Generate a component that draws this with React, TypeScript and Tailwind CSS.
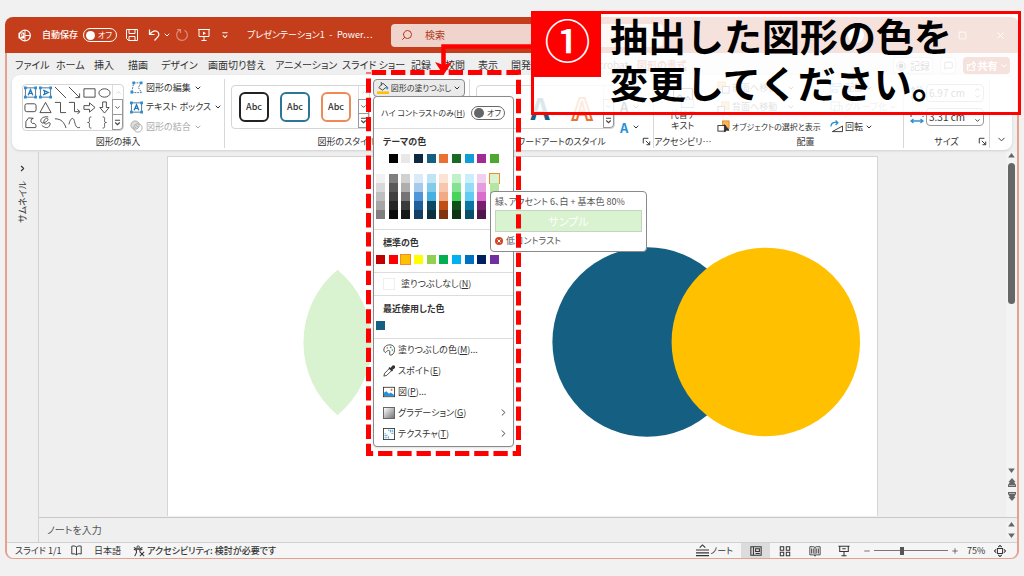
import type { ReactNode } from 'react'
import { ChevronDown, ChevronRight, MessageSquare, Minus, Plus, Search, Square, X } from 'lucide-react'

const tabs = ['ファイル', 'ホーム', '挿入', '描画', 'デザイン', '画面切り替え', 'アニメーション', 'スライド ショー', '記録', '校閲', '表示', '開発', 'ヘルプ', 'Acrobat', '図形の書式']

const themeColors = ['#ffffff', '#000000', '#e8e8e8', '#0e2841', '#156082', '#e97132', '#196b24', '#0f9ed5', '#a02b93', '#4ea72e']

const shades = [
  ['#f2f2f2', '#d9d9d9', '#bfbfbf', '#a6a6a6', '#7f7f7f'],
  ['#7f7f7f', '#595959', '#404040', '#262626', '#0d0d0d'],
  ['#d1d1d1', '#aeaeae', '#747474', '#3a3a3a', '#171717'],
  ['#dceaf7', '#a6caec', '#4e95d9', '#215f9a', '#153e64'],
  ['#c1e4f5', '#83cbeb', '#45b0e1', '#104862', '#0c3042'],
  ['#fbe3d6', '#f6c6ad', '#f2aa84', '#c04f15', '#80350e'],
  ['#c1f1c8', '#84e291', '#47d45a', '#12501b', '#0d3512'],
  ['#caeefb', '#95dcf7', '#61cbf4', '#0b769f', '#084f6a'],
  ['#f2cfee', '#e59edd', '#d86dcd', '#78206e', '#501549'],
  ['#d9f2d0', '#b4e5a2', '#8ed973', '#3b7d23', '#275317'],
]

const standardColors = ['#c00000', '#ff0000', '#ffc000', '#ffff00', '#92d050', '#00b050', '#00b0f0', '#0070c0', '#002060', '#7030a0']

function Icon({ children, size = 14, className = '' }: { children: ReactNode; size?: number; className?: string }) {
  return (
    <svg width={size} height={size} viewBox="0 0 14 14" fill="none" stroke="currentColor" strokeWidth="1" className={`shrink-0 ${className}`} aria-hidden="true">
      {children}
    </svg>
  )
}

function Caret() {
  return <ChevronDown size={8} strokeWidth={3} className="shrink-0" aria-hidden="true" />
}

function TitleBar() {
  return (
    <header className="flex h-9 items-center rounded-t-lg bg-[#c43e1c] text-[9px] text-white">
      <Icon size={13} className="ml-[13px]">
        <circle cx="7.5" cy="7" r="5.8" strokeWidth="1.3" />
        <path d="M7.5 1.2V7h5.8M7.5 7v5.8" />
        <rect x="0.5" y="3.8" width="6.5" height="6.5" rx="1" fill="white" stroke="none" />
        <path d="M2.8 9V5.2h1.4a1.1 1.1 0 0 1 0 2.3H2.8" stroke="#c43e1c" />
      </Icon>
      <span className="ml-[11px] w-9 font-medium">自動保存</span>
      <button type="button" role="switch" aria-checked="false" className="ml-[5px] flex h-[14px] w-[34px] shrink-0 items-center gap-[3px] rounded-full border border-white pl-[2px] text-[8px]">
        <span className="size-[9px] shrink-0 rounded-full bg-white" />
        オフ
      </button>
      <button type="button" aria-label="上書き保存" className="ml-2">
        <Icon>
          <path d="M1.5 1.5h11v11h-9l-2-2zM4 1.5v4h6v-4M4 12.5v-4h6v4" />
        </Icon>
      </button>
      <button type="button" aria-label="元に戻す" className="ml-2 flex items-center gap-[2px]">
        <Icon>
          <path d="M2.5 1.5v5h5M2.7 6.3C5 3.500 7.500 2 9.800 3.200c2.700 1.500 2.500 4.300.8 6L7.500 12.500" strokeWidth="1.200" />
        </Icon>
        <Caret />
      </button>
      <button type="button" aria-label="やり直し" className="ml-1 opacity-40">
        <Icon>
          <path d="M2 1.500h3.500V5M5.500 1.800A5.400 5.400 0 1 0 9.500 2.200" strokeWidth="1.200" />
        </Icon>
      </button>
      <button type="button" aria-label="最初から" className="ml-2">
        <Icon>
          <path d="M1 1.500h12M2 1.500v7h10v-7M7 8.500v4M4.500 12.500h5" />
          <path d="M6 3.500v3.500l3-1.700z" fill="currentColor" stroke="none" />
        </Icon>
      </button>
      <button type="button" aria-label="クイック アクセスのカスタマイズ" className="ml-2">
        <Icon size={12}>
          <path d="M4 4.500h6M4.500 7.500 7 10l2.500-2.500" strokeWidth="1.200" />
        </Icon>
      </button>
      <h1 className="ml-4 w-[144px] shrink-0">プレゼンテーション1&ensp;-&ensp;Power⋯</h1>
      <label className="flex h-[23px] w-[272px] items-center gap-3 rounded-sm bg-[#f0d4cc] pl-[10px] text-[#b0391a]">
        <Search size={12} className="shrink-0 -scale-x-100" aria-hidden="true" />
        <input type="search" aria-label="検索" placeholder="検索" className="w-full bg-transparent text-[10px] outline-none placeholder:text-[#b0391a]" />
      </label>
      <span className="ml-auto size-4 rounded-full bg-white" />
      <div className="ml-14 flex items-center gap-7 pr-[13px]">
        <button type="button" aria-label="最小化">
          <Minus size={10} />
        </button>
        <button type="button" aria-label="最大化">
          <Square size={9} />
        </button>
        <button type="button" aria-label="閉じる">
          <X size={11} />
        </button>
      </div>
    </header>
  )
}

function TabRow() {
  return (
    <div className="flex h-[22px] items-center justify-between pr-[7px] pl-2">
      <nav className="grid grid-cols-[41px_38px_34px_33px_47px_67px_67px_69px_34px_33px_33px_36px_45px_45px_50px] pt-[2px]">
        {tabs.map((tab) => (
          <a key={tab} href="#" className={tab === '図形の書式' ? 'font-bold text-[#c43e1c] underline' : ''}>
            {tab}
          </a>
        ))}
      </nav>
      <div className="flex items-center gap-[7px] pt-[3px]">
        <button type="button" className="flex h-[17px] w-10 items-center justify-center gap-1 rounded-sm border border-[#c8c8c8] bg-white">
          <Icon size={10}>
            <circle cx="7" cy="7" r="6" />
            <circle cx="7" cy="7" r="3" fill="currentColor" />
          </Icon>
          記録
        </button>
        <button type="button" aria-label="コメント" className="flex h-[17px] w-4 items-center justify-center rounded-sm border border-[#c8c8c8] bg-white">
          <MessageSquare size={9} />
        </button>
        <button type="button" className="flex h-[17px] w-[47px] items-center justify-center gap-[2px] rounded-sm bg-[#c43e1c] font-bold text-white">
          <Icon size={10}>
            <path d="M6 5H2v8h10V9M4 9c0-4 3-5 6-5V1l4 4-4 4V6" strokeWidth="1.500" />
          </Icon>
          共有
          <Caret />
        </button>
      </div>
    </div>
  )
}

function GalleryScroll() {
  return (
    <div className="flex w-[11px] shrink-0 flex-col text-[#444]">
      <button type="button" aria-label="上へ" className="flex flex-1 items-center justify-center border-l border-[#ddd] text-[#bbb]">
        <ChevronDown size={7} className="rotate-180" />
      </button>
      <button type="button" aria-label="下へ" className="flex flex-1 items-center justify-center border border-[#999]">
        <ChevronDown size={7} strokeWidth={3} />
      </button>
      <button type="button" aria-label="その他" className="flex flex-1 items-center justify-center rounded-br-sm border border-t-0 border-[#999]">
        <Icon size={9}>
          <path d="M3 3.500h8M3.500 7 7 10.500 10.500 7" strokeWidth="1.800" />
        </Icon>
      </button>
    </div>
  )
}

function Group({ label, className, launcher, children }: { label: string; className: string; launcher?: boolean; children: ReactNode }) {
  return (
    <section className={`flex shrink-0 items-stretch pt-1 pb-[2px] ${className}`}>
      <div className="flex flex-1 flex-col">
        <div className="flex h-14 shrink-0">{children}</div>
        <div className="relative flex h-[13px] items-center justify-center text-[9px]">
          {label}
          {launcher ? (
            <button type="button" aria-label={`${label}の詳細`} className="absolute right-[2px]">
              <Icon size={9}>
                <path d="M2 10V2h8M6 6l6 6M12 7v5H7" strokeWidth="1.500" />
              </Icon>
            </button>
          ) : null}
        </div>
      </div>
      <div className="w-px bg-[#d8d8d8]" />
    </section>
  )
}

function TextBoxIcon({ vertical }: { vertical?: boolean }) {
  return (
    <Icon size={13}>
      <rect x="1.500" y="2" width="11" height="10" stroke="#4a6f8f" />
      <path d="M0 .5h3v3H0zM11 .5h3v3h-3zM0 10.500h3v3H0zM11 10.500h3v3h-3z" fill="#2b8fd6" stroke="none" />
      <path d={vertical ? 'M4.500 4.500 10 7l-5.500 2.500M6 5.500v3' : 'M4.500 10 7 4l2.500 6M5.500 8h3'} stroke="#1b78c2" strokeWidth="1.400" />
    </Icon>
  )
}

const shapePaths = [
  'M1 1l12 12',
  'M1 1l11 11M12.500 8v4.500H8',
  'M1 3h12v9H1z',
  'M1 7.500a6 4.500 0 1 0 12 0a6 4.500 0 1 0-12 0',
  'M3 3h8a2 2 0 0 1 2 2v4.500a2 2 0 0 1-2 2H3a2 2 0 0 1-2-2V5a2 2 0 0 1 2-2z',
  'M7 1.500 13 12.500H1z',
  'M1 1.500h6v11h6',
  'M1 1.500h6v10h5M10 9l3 2.500-3 2.500',
  'M1 5h6V2l6 5-6 5V9H1z',
  'M5 1h4v6h3l-5 6-5-6h3z',
  'M5 2 2 6v6.500h10.500a3 3 0 0 0-3.500-4.500a3 3 0 0 1 1-5.500z',
  'M10 1C5 0 1 3 2 6s5 1 7-1-1-4-3-1 0 6 3 4 4 0 2 3-6 1-8-1',
  'M1 3c7 0 10 4 12 10',
  'M1 9C3 1 6 1 7 6s3 8 6 6',
  'M9 1C6 1 7 3 7 5s-1 2-2 2c1 0 2 0 2 2s-1 4 2 4',
  'M5 1c3 0 2 2 2 4s1 2 2 2c-1 0-2 0-2 2s1 4-2 4',
]

function ShapeGroup() {
  return (
    <Group label="図形の挿入" className="w-[213px]">
      <div className="mt-[5px] ml-[10px] flex h-[47px] w-[102px] rounded-sm border border-[#d5d5d5]">
        <div className="grid flex-1 grid-cols-6 place-items-center text-[#444]">
          <TextBoxIcon />
          <TextBoxIcon vertical />
          {shapePaths.map((d) => (
            <Icon key={d} size={13}>
              <path d={d} />
            </Icon>
          ))}
        </div>
        <GalleryScroll />
      </div>
      <div className="ml-[6px] flex flex-col justify-between py-[2px] text-[9px]">
        <button type="button" className="flex items-center gap-[3px]">
          <Icon size={13}>
            <path d="M4 2h8M2 11.500 4 2M12 2l-3 5 3.500 5.500H2" stroke="#4a6f8f" strokeDasharray="2 1" />
            <path d="M2.500.500h3v3h-3zM10.500.500h3v3h-3zM.5 10.500h3v3h-3z" fill="#2b8fd6" stroke="none" />
          </Icon>
          図形の編集
          <Caret />
        </button>
        <button type="button" className="flex items-center gap-[3px]">
          <TextBoxIcon />
          テキスト ボックス
          <Caret />
        </button>
        <button type="button" disabled className="flex items-center gap-[3px] text-[#aaa]">
          <Icon size={13}>
            <circle cx="5.500" cy="5.500" r="4.500" fill="#ddd" />
            <circle cx="8.500" cy="8.500" r="4.500" />
            <path d="M6 5l3 3M5 7l2 2" />
          </Icon>
          図形の結合
          <Caret />
        </button>
      </div>
    </Group>
  )
}

function Swatch({ color, selected }: { color: string; selected?: boolean }) {
  return (
    <button
      type="button"
      aria-label={color}
      className={selected ? 'size-[9px] shrink-0 outline-1 outline-[#f08c2e]' : 'size-[9px] shrink-0'}
      style={{ backgroundColor: color }}
    />
  )
}

function MenuHeading({ children }: { children: ReactNode }) {
  return <h2 className="flex h-[25px] items-center pl-[9px] text-[9px] font-bold">{children}</h2>
}

function MenuItem({ icon, label, accessKey, tail, submenu }: { icon: ReactNode; label: string; accessKey: string; tail?: string; submenu?: boolean }) {
  return (
    <button type="button" className="flex h-[21px] w-full items-center gap-[3px] pr-1 pl-[9px] text-left">
      {icon}
      <span>
        {label}(<u>{accessKey}</u>){tail}
      </span>
      {submenu ? <ChevronRight size={11} className="ml-auto" aria-hidden="true" /> : null}
    </button>
  )
}

function ColorTooltip() {
  return (
    <div role="tooltip" className="absolute top-[94px] left-[116px] flex h-[61px] w-[157px] flex-col rounded-sm border border-[#8a8a8a] bg-white px-1 pt-[2px] text-[9px] text-[#555]">
      <div className="flex h-4 items-center">緑、アクセント 6、白 + 基本色 80%</div>
      <div className="flex h-[22px] items-center justify-center border border-[#c5d3bf] bg-[#d9f2d0] text-[11px] text-white">サンプル</div>
      <div className="flex h-[18px] items-center gap-[3px]">
        <svg width="8" height="8" viewBox="0 0 8 8" aria-hidden="true">
          <circle cx="4" cy="4" r="4" fill="#d24726" />
          <path d="M2.500 2.500l3 3M5.500 2.500l-3 3" stroke="white" />
        </svg>
        低コントラスト
      </div>
    </div>
  )
}

function FillMenu() {
  return (
    <div className="absolute top-[17px] left-0 z-20 w-[141px] rounded-sm border border-[#8a8a8a] bg-white pb-[2px] text-[9px] text-[#333] shadow-sm">
      <div className="flex h-8 items-center justify-between border-b border-[#ddd] pr-2 pl-[7px] text-[8px]">
        <span>
          ハイ コントラストのみ(<u>H</u>)
        </span>
        <button type="button" role="switch" aria-checked="false" aria-label="ハイ コントラストのみ" className="flex h-[14px] w-[34px] shrink-0 items-center gap-[3px] rounded-full border border-[#666] pl-[2px]">
          <span className="size-[10px] shrink-0 rounded-full bg-[#666]" />
          オフ
        </button>
      </div>
      <MenuHeading>テーマの色</MenuHeading>
      <div className="flex justify-between pr-[14px] pl-[2px]">
        {themeColors.map((color) => (
          <Swatch key={color} color={color} />
        ))}
      </div>
      <div className="mt-[11px] flex justify-between pr-[14px] pb-[10px] pl-[2px]">
        {shades.map((column, i) => (
          <div key={themeColors[i]} className="flex flex-col">
            {column.map((color) => (
              <Swatch key={color} color={color} selected={color === '#d9f2d0'} />
            ))}
          </div>
        ))}
      </div>
      <div className="border-t border-[#ddd]">
        <MenuHeading>標準の色</MenuHeading>
        <div className="flex justify-between pr-[14px] pb-2 pl-[2px]">
          {standardColors.map((color) => (
            <Swatch key={color} color={color} selected={color === '#ffc000'} />
          ))}
        </div>
      </div>
      <button type="button" className="flex h-6 w-full items-center gap-[6px] border-t border-b border-[#ddd] pl-[9px]">
        <span className="size-3 border border-[#eee]" />
        <span>
          塗りつぶしなし(<u>N</u>)
        </span>
      </button>
      <MenuHeading>最近使用した色</MenuHeading>
      <div className="flex border-b border-[#ddd] pb-2 pl-[2px]">
        <Swatch color="#156082" />
      </div>
      <MenuItem
        label="塗りつぶしの色"
        accessKey="M"
        tail="..."
        icon={
          <Icon size={12}>
            <path d="M1 7C1 3 4 1 8 1s6 3 5.500 6.500C13 11 11 13 9 13s-1-2-1-4-3-2-4 0-3 0-3-2z" />
            <circle cx="5" cy="4.500" r="1" fill="#e97132" stroke="none" />
            <circle cx="9" cy="4" r="1" fill="#2b8fd6" stroke="none" />
            <circle cx="11" cy="7" r="1" fill="#4ea72e" stroke="none" />
          </Icon>
        }
      />
      <MenuItem
        label="スポイト"
        accessKey="E"
        icon={
          <Icon size={12}>
            <path d="M1 13l1-3.500L7.500 4l2.500 2.500L4.500 12z" />
            <path d="M7 3l4 4M9 5l2.500-3.500a1 1 0 0 1 1.500 1.500L9.500 5.500" strokeWidth="2" />
          </Icon>
        }
      />
      <MenuItem
        label="図"
        accessKey="P"
        tail="..."
        icon={
          <Icon size={12}>
            <rect x=".5" y="1.500" width="13" height="11" />
            <path d="M1 12V8l3-2 3 3 2-1.500 4 3V12z" fill="#2b8fd6" stroke="none" />
            <circle cx="10" cy="4.500" r="1.200" fill="#e97132" stroke="none" />
          </Icon>
        }
      />
      <MenuItem
        label="グラデーション"
        accessKey="G"
        submenu
        icon={<span className="size-3 shrink-0 border border-[#666] bg-linear-to-br from-white to-[#777]" />}
      />
      <MenuItem
        label="テクスチャ"
        accessKey="T"
        submenu
        icon={
          <Icon size={12}>
            <rect x=".5" y=".5" width="13" height="13" />
            <path d="M2.500 6v6.500M4.500 8v4.500M6.500 10v2.500M6 2.500h6.500M8 4.500h4.500M10 6.500h2.500" stroke="#2b8fd6" strokeWidth="1.200" strokeDasharray="1.300 .8" />
          </Icon>
        }
      />
      <ColorTooltip />
    </div>
  )
}

function StyleGroup() {
  const card = 'flex h-[30px] w-[30px] items-center justify-center rounded-md border-2'
  return (
    <Group label="図形のスタイル" className="w-[245px]">
      <div className="mt-[6px] ml-[6px] flex h-[44px] w-[139px] shrink-0 rounded-sm border border-[#d5d5d5]">
        <div className="flex flex-1 items-center justify-between pr-[7px] pl-[7px] text-[9px] font-medium">
          <button type="button" className={`${card} border-[#222]`}>
            Abc
          </button>
          <button type="button" className={`${card} border-[#2c7599]`}>
            Abc
          </button>
          <button type="button" className={`${card} border-[#ee8a57]`}>
            Abc
          </button>
        </div>
        <GalleryScroll />
      </div>
      <div className="relative ml-[3px] h-[18px] w-[92px] shrink-0">
        <button type="button" className="flex h-[18px] w-full items-center justify-center gap-[2px] rounded-sm border border-[#8a8a8a] bg-[#ebebeb] text-[8px]">
          <Icon size={12}>
            <path d="M2 6.500 7 1.500l4.500 4L6.500 9.500zM5 0v4" />
            <path d="M12 5.500v3" stroke="#2b8fd6" strokeWidth="2" />
            <path d="M0 11h14v3H0z" fill="#ffc000" stroke="none" />
          </Icon>
          図形の塗りつぶし
          <Caret />
        </button>
        <FillMenu />
      </div>
    </Group>
  )
}

function WordArtGroup() {
  return (
    <Group label="ワードアートのスタイル" className="w-[184px]" launcher>
      <div className="mt-[6px] ml-[6px] flex h-[44px] w-[139px] rounded-sm border border-[#d5d5d5]">
        <div className="flex flex-1 items-center justify-around text-[30px] leading-none font-bold">
          <button type="button" className="text-[#222]">A</button>
          <button type="button" className="text-[#156082]">A</button>
          <button type="button" className="text-white [-webkit-text-stroke:2px_#e97132]">A</button>
        </div>
        <GalleryScroll />
      </div>
      <div className="ml-[5px] flex flex-col justify-end gap-[2px] text-[13px] leading-none font-bold">
        <button type="button" aria-label="文字の塗りつぶし" className="flex h-5 items-center gap-1">
          <span className="border-b-2 border-[#222]">A</span>
          <Caret />
        </button>
        <button type="button" aria-label="文字の効果" className="flex h-4 items-center gap-1">
          <span className="text-[#2b8fd6]">A</span>
          <Caret />
        </button>
      </div>
    </Group>
  )
}

function OrderIcon({ flip }: { flip?: boolean }) {
  return (
    <Icon size={13}>
      <rect x={flip ? 5 : 1} y="1" width="8" height="8" fill="#f7b55e" stroke="#e08b24" />
      <rect x={flip ? 1 : 6} y="6" width="7" height="7" fill="white" />
    </Icon>
  )
}

function ArrangeGroup() {
  return (
    <Group label="配置" className="w-[196px]">
      <div className="flex w-[114px] shrink-0 flex-col justify-between py-[2px] pl-[9px] text-[9px]">
        <button type="button" className="flex items-center gap-[2px]">
          <OrderIcon />
          前面へ移動
          <span className="ml-2">
            <Caret />
          </span>
        </button>
        <button type="button" className="flex items-center gap-[2px]">
          <OrderIcon flip />
          背面へ移動
          <span className="ml-2">
            <Caret />
          </span>
        </button>
        <button type="button" className="flex items-center gap-[2px] text-[8px]">
          <Icon size={13}>
            <rect x="6" y="1" width="7" height="8" fill="#f7b55e" stroke="#e08b24" />
            <rect x="1" y="6" width="8" height="6" fill="white" />
            <path d="M8 5v8l2-2h3z" fill="#333" />
          </Icon>
          オブジェクトの選択と表示
        </button>
      </div>
      <div className="flex flex-col justify-between py-[2px] pl-[8px] text-[9px]">
        <button type="button" className="flex items-center gap-[2px]">
          <Icon size={13}>
            <path d="M1 1v12M3 3h9v3H3zM3 9h5v3H3z" stroke="#2b8fd6" />
          </Icon>
          配置
          <Caret />
        </button>
        <button type="button" disabled className="flex items-center gap-[2px] text-[#999]">
          <Icon size={13}>
            <path d="M1 1h9v9H1zM5 5h8v8H5z" />
          </Icon>
          グループ化
          <Caret />
        </button>
        <button type="button" className="flex items-center gap-[2px]">
          <Icon size={13}>
            <path d="M2.500 12.500h11v-6z" />
            <path d="M1 7c0-4 3-5 7-4M6 .5 8.500 3 6 5.500" stroke="#2b8fd6" strokeWidth="1.400" />
          </Icon>
          回転
          <Caret />
        </button>
      </div>
    </Group>
  )
}

function SizeField({ label, value, vertical }: { label: string; value: string; vertical?: boolean }) {
  return (
    <label className="flex items-center gap-[2px]">
      <Icon className={vertical ? 'rotate-90' : ''}>
        <path d="M1 7V2h12v5" strokeDasharray="2 1" />
        <path d="M1 11h12M3.500 9 1 11l2.500 2M10.500 9l2.500 2-2.500 2" stroke="#2b8fd6" strokeWidth="1.300" />
      </Icon>
      <span className="flex h-[18px] w-[58px] items-center rounded-sm border border-[#999] pr-[2px] pl-[2px]">
        <input aria-label={label} defaultValue={value} className="w-full min-w-0 bg-transparent text-[10px] outline-none" />
        <span className="flex flex-col">
          <ChevronDown size={7} strokeWidth={3} className="rotate-180" />
          <ChevronDown size={7} strokeWidth={3} />
        </span>
      </span>
    </label>
  )
}

function Ribbon() {
  return (
    <div className="mx-[5px] flex rounded-lg bg-white shadow-sm">
      <ShapeGroup />
      <StyleGroup />
      <WordArtGroup />
      <Group label="アクセシビリ⋯" className="w-[54px]">
        <button type="button" className="flex flex-1 flex-col items-center justify-end pb-1 text-[9px] leading-[11px]">
          <Icon size={22}>
            <path d="M1 1h12v8H1zM2 8l3-3 3 3 2-2 3 3" strokeWidth=".7" />
            <rect x="6" y="8" width="8" height="5" fill="white" stroke="#2b8fd6" strokeWidth=".7" />
          </Icon>
          <span>代替テ</span>
          <span>キスト</span>
        </button>
      </Group>
      <ArrangeGroup />
      <Group label="サイズ" className="w-[86px]" launcher>
        <div className="flex flex-col gap-[6px] pt-[5px] pl-[6px]">
          <SizeField label="高さ" value="6.97 cm" vertical />
          <SizeField label="幅" value="3.31 cm" />
        </div>
      </Group>
      <button type="button" aria-label="リボンを折りたたむ" className="flex flex-1 items-end justify-center pb-[5px]">
        <ChevronDown size={11} />
      </button>
    </div>
  )
}

function Arrow({ down }: { down?: boolean }) {
  return (
    <svg width="7" height="5" viewBox="0 0 8 6" className={down ? 'rotate-180' : ''} aria-hidden="true">
      <path d="M4 0 8 5.500H0z" fill="#666" />
    </svg>
  )
}

function DoubleArrow({ down }: { down?: boolean }) {
  return (
    <svg width="8" height="9" viewBox="0 0 8 9" className={down ? 'rotate-180' : ''} aria-hidden="true">
      <path d="M4 0 7.500 4H6.200L8 7v2H0V7l1.800-3H.5z" fill="#666" />
      <path d="M1 7.500h6" stroke="#ccc" strokeWidth=".7" />
    </svg>
  )
}

function Workspace() {
  return (
    <div className="flex flex-1 pt-[2px]">
      <aside className="flex w-[32px] flex-col items-center gap-2 border-r border-[#d2d2d2] pt-3">
        <ChevronRight size={9} strokeWidth={3} aria-hidden="true" />
        <span className="rotate-180 text-[9px] [text-orientation:sideways] [writing-mode:vertical-rl]">サムネイル</span>
      </aside>
      <main className="flex flex-1 flex-col">
        <div className="flex flex-1">
          <div className="flex flex-1 items-start px-32 pt-1">
            <svg viewBox="0 0 711 360" className="w-full border border-b-0 border-[#d5d5d5] bg-white" role="img" aria-label="スライド">
              <path d="M170 113a95 95 0 0 0 0 146a95 95 0 0 0 0-146z" fill="#d9f2d0" />
              <circle cx="480.500" cy="185.500" r="95" fill="#156082" />
              <circle cx="599.500" cy="185.500" r="94.500" fill="#ffc000" />
            </svg>
          </div>
          <div className="flex w-[11px] flex-col items-center gap-[5px] bg-[#f3f3f3] pt-[1px] pb-4">
            <Arrow />
            <div className="h-[141px] w-[7px] rounded-full bg-[#666]" />
            <div className="flex-1" />
            <Arrow down />
            <DoubleArrow />
            <DoubleArrow down />
          </div>
        </div>
        <div className="flex h-[25px] items-center border-t border-[#c8c8c8]">
          <input aria-label="ノート" placeholder="ノートを入力" className="flex-1 bg-transparent pl-2 text-[10px] outline-none placeholder:text-[#555]" />
          <div className="flex w-[11px] flex-col items-center gap-[6px] bg-[#f3f3f3]">
            <Arrow />
            <Arrow down />
          </div>
        </div>
      </main>
    </div>
  )
}

function StatusBar() {
  return (
    <footer className="flex h-4 items-center rounded-b-lg border-t border-[#d0d0d0] bg-[#f5f5f5] pr-[11px] pl-2 text-[9px]">
      <span className="w-14">スライド 1/1</span>
      <Icon size={11}>
        <path d="M7 2.500C5 1 3 1 1 1.500v10c2-.5 4-.5 6 1 2-1.500 3-2 6-1v-10c-2-.5-4-.5-6 1v10" strokeWidth="1.200" />
      </Icon>
      <span className="ml-3 w-[39px]">日本語</span>
      <Icon size={12}>
        <circle cx="6" cy="2.500" r="1.500" />
        <path d="M1 5l3 1v3l-2 4M11 5 8 6v2M1 3l4 2h2l4-2M8 8l5 5M13 8l-5 5" strokeWidth="1.200" />
      </Icon>
      <button type="button" className="ml-[2px] font-medium">
        アクセシビリティ: 検討が必要です
      </button>
      <button type="button" className="ml-auto flex items-center gap-[1px]">
        <Icon size={13}>
          <path d="M0 6.500h14M0 9.500h14M0 12.500h14M4 4l3-3 3 3" strokeWidth="1.200" />
        </Icon>
        ノート
      </button>
      <div className="ml-2 flex h-full items-center">
        <button type="button" aria-label="標準" className="flex h-full w-[29px] items-center justify-center bg-[#dcdcdc]">
          <Icon size={12}>
            <path d="M1 2h12v10H1zM4 2v10M6.500 4.500h4.500v3H6.500zM6.500 10h5" strokeWidth="1.200" />
          </Icon>
        </button>
        <button type="button" aria-label="スライド一覧" className="flex w-[30px] justify-center">
          <Icon size={12}>
            <path d="M1.500 2h4v4h-4zM8.500 2h4v4h-4zM1.500 8.500h4v4h-4zM8.500 8.500h4v4h-4z" strokeWidth="1.200" />
          </Icon>
        </button>
        <button type="button" aria-label="閲覧表示" className="flex w-[29px] justify-center">
          <Icon size={12}>
            <path d="M1 2h4.500L7 3l1.500-1H13v9.500H8.500L7 13l-1.500-1.500H1zM7 3v10M3 4v6M5 4v6M9 4v6M11 4v6" />
          </Icon>
        </button>
        <button type="button" aria-label="スライド ショー" className="flex w-[30px] justify-center">
          <Icon size={12}>
            <path d="M.5 1.500h13M2 1.500v6h10v-6M7 7.500v5M4 12.500h6M5 4.500h4" strokeWidth="1.200" />
          </Icon>
        </button>
      </div>
      <button type="button" aria-label="縮小" className="ml-1">
        <Minus size={8} />
      </button>
      <input
        type="range"
        aria-label="ズーム"
        min={0}
        max={100}
        defaultValue={37}
        className="mx-[3px] h-px w-[74px] appearance-none bg-[#777] [&::-webkit-slider-thumb]:h-2 [&::-webkit-slider-thumb]:w-1 [&::-webkit-slider-thumb]:appearance-none [&::-webkit-slider-thumb]:bg-[#555]"
      />
      <button type="button" aria-label="拡大">
        <Plus size={8} />
      </button>
      <span className="ml-2 w-[27px]">75%</span>
      <button type="button" aria-label="ウィンドウに合わせる">
        <Icon size={12}>
          <path d="M4 4h6v6H4zM5 2.500 7 .5l2 2M5 11.500l2 2 2-2M2.500 5l-2 2 2 2M11.500 5l2 2-2 2" strokeWidth="1.200" />
        </Icon>
      </button>
    </footer>
  )
}

// Red instruction layer: dashed frame around the menu, leader arrow and caption
function Annotation() {
  return (
    <>
      <svg width="160" height="392" className="pointer-events-none absolute top-[68px] left-[364px] z-30" aria-hidden="true">
        <path d="M4.500 4.500H154.500V385.500H4.500Z" fill="none" stroke="#ff0000" strokeWidth="5" strokeDasharray="14.300 4.930" strokeDashoffset="-3.300" />
      </svg>
      <svg width="96" height="34" className="pointer-events-none absolute top-[42px] left-[435px] z-30" aria-hidden="true">
        <path d="M96 4.500H8.500V24" fill="none" stroke="#ff0000" strokeWidth="4.500" />
        <path d="M0 20l8.500 3 8.500-3L8.500 33z" fill="#ff0000" />
      </svg>
      <div className="absolute top-[11px] right-[3px] z-40 flex h-[104px] w-[490px] border-3 border-[#ff0000] bg-white/85 text-black">
        <div className="flex h-[63px] w-[67px] shrink-0 justify-center bg-[#ff0000] text-[46px] leading-[48px] font-medium text-white">①</div>
        <p className="-mt-[3px] pl-[9px] text-[38px] leading-[47px] font-bold [font-feature-settings:normal]">
          抽出した図形の色を
          <br />
          変更してください。
        </p>
      </div>
    </>
  )
}

export default function App() {
  return (
    <div className="relative flex min-h-screen flex-col overflow-hidden bg-[#f1f1f1] px-[5px] py-[17px] font-['Noto_Sans_CJK_JP',sans-serif] text-[10px] leading-[12px] whitespace-nowrap text-[#333] [font-feature-settings:'palt']">
      <TitleBar />
      <div className="flex flex-1 flex-col rounded-b-lg border-x-2 border-b border-[#e5a090] bg-[#efefef]">
        <TabRow />
        <Ribbon />
        <Workspace />
        <StatusBar />
      </div>
      <Annotation />
    </div>
  )
}
